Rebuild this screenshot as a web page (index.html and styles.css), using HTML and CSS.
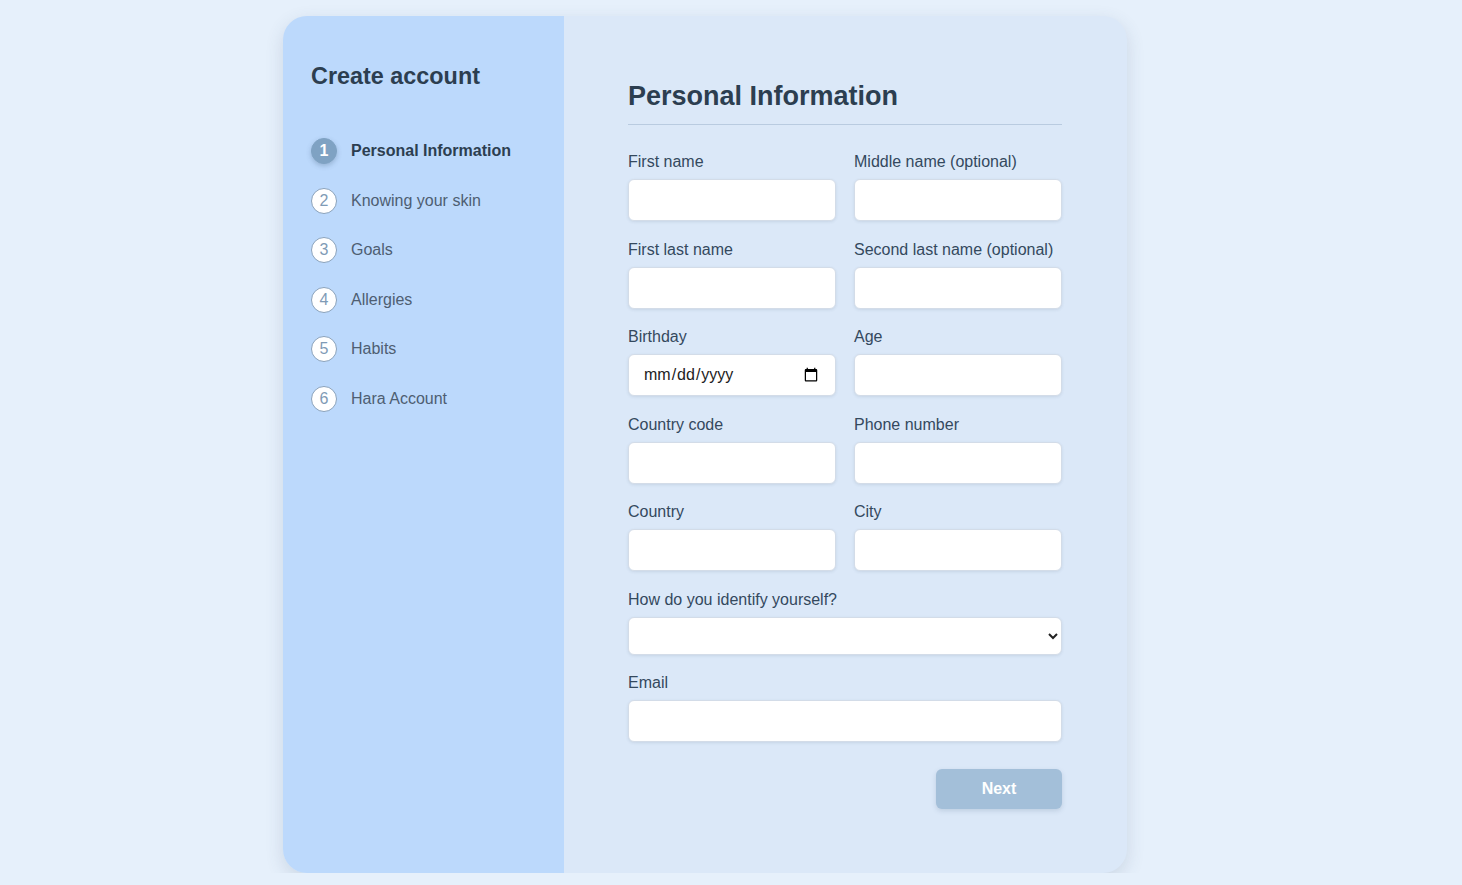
FILE: index.html
```html
<!DOCTYPE html>
<html lang="en">
<head>
<meta charset="utf-8">
<title>Create account</title>
<link rel="stylesheet" href="styles.css">
</head>
<body>
<div class="wrap">
  <div class="card">
    <aside class="sidebar">
      <h1 class="side-title">Create account</h1>
      <ol class="steps">
        <li class="step active"><span class="num">1</span><span class="step-label">Personal Information</span></li>
        <li class="step"><span class="num">2</span><span class="step-label">Knowing your skin</span></li>
        <li class="step"><span class="num">3</span><span class="step-label">Goals</span></li>
        <li class="step"><span class="num">4</span><span class="step-label">Allergies</span></li>
        <li class="step"><span class="num">5</span><span class="step-label">Habits</span></li>
        <li class="step"><span class="num">6</span><span class="step-label">Hara Account</span></li>
      </ol>
    </aside>
    <main class="main">
      <h2 class="form-title">Personal Information</h2>
      <form class="form">
        <div class="grid">
          <label class="field"><span class="lbl">First name</span><input class="inp" type="text"></label>
          <label class="field"><span class="lbl">Middle name (optional)</span><input class="inp" type="text"></label>
          <label class="field"><span class="lbl">First last name</span><input class="inp" type="text"></label>
          <label class="field"><span class="lbl">Second last name (optional)</span><input class="inp" type="text"></label>
          <label class="field"><span class="lbl">Birthday</span><input class="inp" type="date"></label>
          <label class="field"><span class="lbl">Age</span><input class="inp" type="text"></label>
          <label class="field"><span class="lbl">Country code</span><input class="inp" type="text"></label>
          <label class="field"><span class="lbl">Phone number</span><input class="inp" type="text"></label>
          <label class="field"><span class="lbl">Country</span><input class="inp" type="text"></label>
          <label class="field"><span class="lbl">City</span><input class="inp" type="text"></label>
          <label class="field full"><span class="lbl">How do you identify yourself?</span>
            <select class="inp sel"><option></option></select>
          </label>
          <label class="field full"><span class="lbl">Email</span><input class="inp" type="email"></label>
        </div>
        <div class="actions">
          <button type="button" class="next" disabled>Next</button>
        </div>
      </form>
    </main>
  </div>
</div>
</body>
</html>
```

FILE: styles.css
```css
* { box-sizing: border-box; }

html, body {
  margin: 0;
  padding: 0;
  background: #e6f0fb;
  font-family: "Liberation Sans", Arial, sans-serif;
  color: #2c3e50;
}

.wrap {
  width: 896px;
  margin: 16px auto 0;
}

.card {
  width: 844px;
  display: flex;
  border-radius: 24px;
  overflow: hidden;
  background: #dbe8f8;
  box-shadow: 0 6px 18px rgba(60, 80, 110, 0.16);
}

.sidebar {
  width: 281px;
  flex: none;
  background: #bcd9fc;
  padding: 46px 20px 40px 28px;
}

.side-title {
  margin: 0;
  font-size: 23.4px;
  line-height: 28px;
  font-weight: 700;
  color: #2c3e50;
}

.steps {
  list-style: none;
  margin: 48px 0 0;
  padding: 0;
  display: flex;
  flex-direction: column;
  gap: 23.6px;
}

.step {
  display: flex;
  align-items: center;
  gap: 14px;
  height: 26px;
}

.num {
  width: 26px;
  height: 26px;
  flex: none;
  border-radius: 50%;
  background: #fff;
  border: 1.5px solid #8aa2bb;
  color: #7f9bb6;
  font-size: 16px;
  display: flex;
  align-items: center;
  justify-content: center;
  line-height: 1;
}

.step-label {
  font-size: 16px;
  color: #4e5e72;
}

.step.active .num {
  background: #7fa2c3;
  border-color: #7fa2c3;
  color: #fff;
  font-weight: 700;
  box-shadow: 0 2px 5px rgba(60, 90, 120, 0.3);
}

.step.active .step-label {
  font-weight: 700;
  color: #2c3e50;
}

.main {
  flex: 1;
  padding: 64px 65px 64px 64px;
}

.form-title {
  margin: 0;
  font-size: 27px;
  line-height: 32px;
  font-weight: 700;
  color: #2c3e50;
  padding-bottom: 12px;
  border-bottom: 1px solid #b9cbe0;
}

.form {
  margin-top: 28px;
}

.grid {
  display: grid;
  grid-template-columns: 1fr 1fr;
  column-gap: 18px;
  row-gap: 19.5px;
}

.field {
  display: flex;
  flex-direction: column;
  gap: 8px;
}

.field.full {
  grid-column: 1 / -1;
}

.lbl {
  font-size: 16px;
  line-height: 18px;
  color: #34495e;
}

.inp {
  height: 42px;
  width: 100%;
  border: 1px solid #d3dce8;
  border-radius: 6px;
  background: #fff;
  box-shadow: 0 1px 3px rgba(60, 80, 110, 0.12);
  font-family: "Liberation Sans", Arial, sans-serif;
  font-size: 16px;
  color: #222;
  padding: 0 14px;
  outline: none;
}

.sel {
  height: 38px;
  padding: 0 8px;
}

.actions {
  display: flex;
  justify-content: flex-end;
  margin-top: 27px;
}

.next {
  width: 126px;
  height: 40px;
  border: none;
  border-radius: 6px;
  background: #a3bfd9;
  color: #fff;
  font-family: "Liberation Sans", Arial, sans-serif;
  font-size: 16px;
  font-weight: 700;
  box-shadow: 0 2px 5px rgba(60, 90, 120, 0.18);
}
```
